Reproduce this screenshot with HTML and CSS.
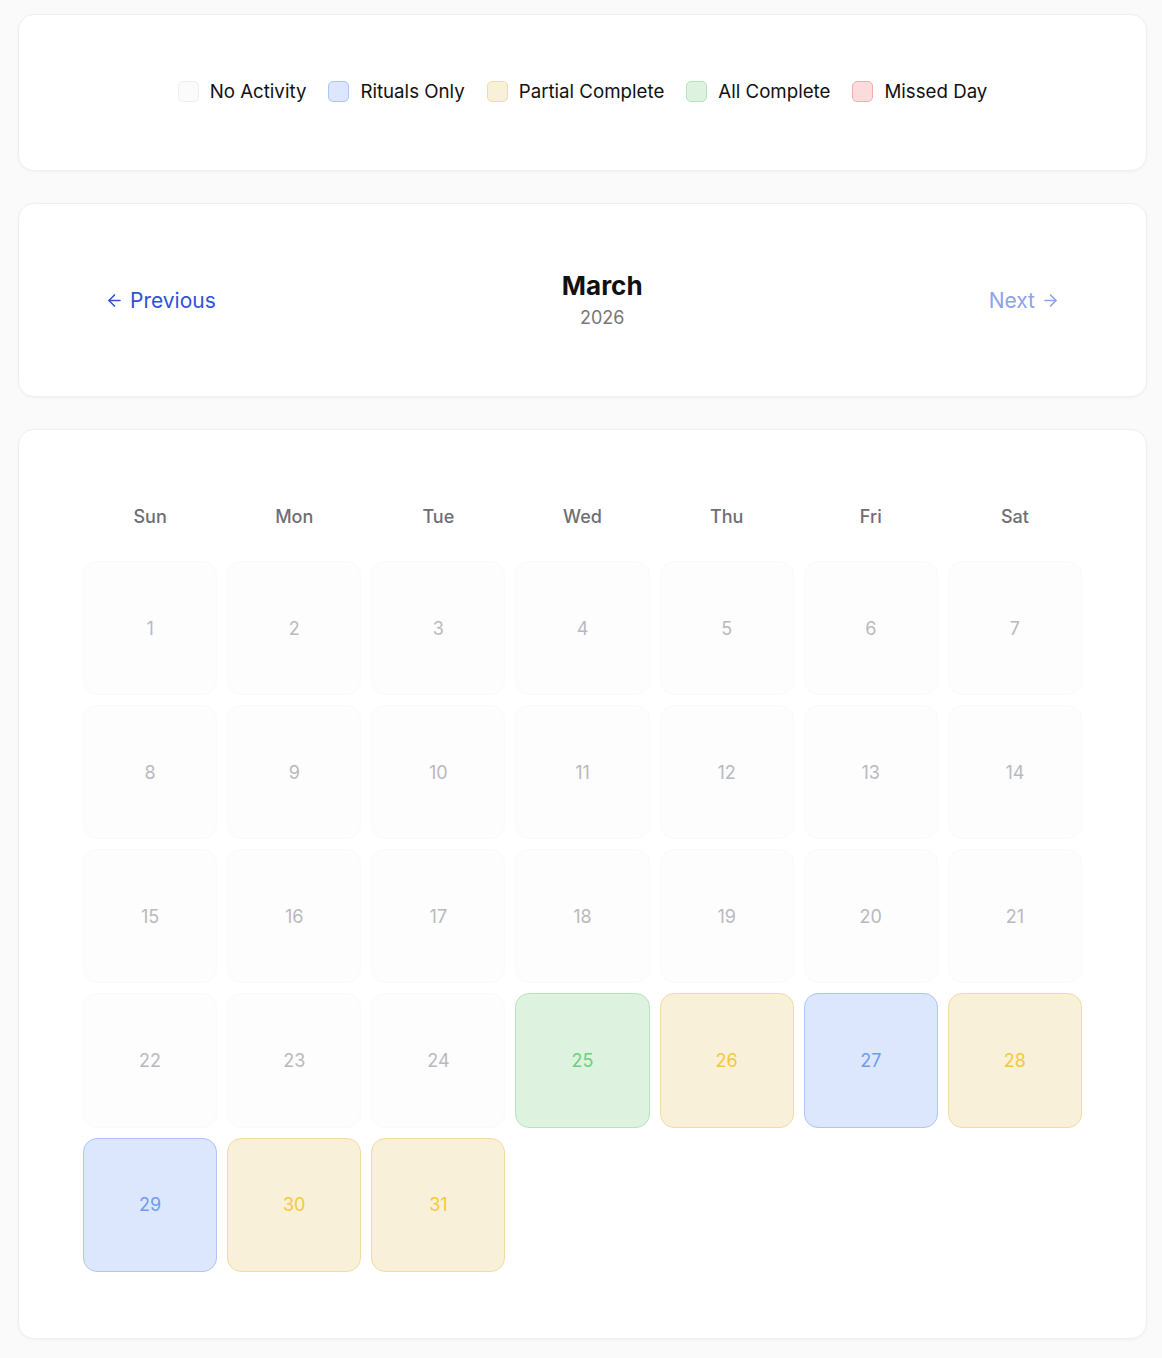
FILE: index.html
```html
<!DOCTYPE html>
<html lang="en">
<head>
    <meta charset="UTF-8">
    <meta name="viewport" content="width=device-width, initial-scale=1.0">
    <title>Ritual Calendar</title>
    <link rel="stylesheet" href="styles.css">
</head>
<body>
    <div class="page">
        <div class="card legend">
            <div class="legend-item"><span class="swatch none"></span>No Activity</div>
            <div class="legend-item"><span class="swatch rituals"></span>Rituals Only</div>
            <div class="legend-item"><span class="swatch partial"></span>Partial Complete</div>
            <div class="legend-item"><span class="swatch complete"></span>All Complete</div>
            <div class="legend-item"><span class="swatch missed"></span>Missed Day</div>
        </div>

        <div class="card month-nav">
            <button class="nav-btn" id="prevBtn">
                <svg width="19" height="19" viewBox="0 0 24 24" fill="none" stroke="currentColor" stroke-width="2" stroke-linecap="round" stroke-linejoin="round"><path d="M19 12H5"/><path d="M12 19l-7-7 7-7"/></svg>
                Previous
            </button>
            <div class="month-title">
                <h2 id="monthName">March</h2>
                <p id="yearName">2026</p>
            </div>
            <button class="nav-btn disabled" id="nextBtn">
                Next
                <svg width="19" height="19" viewBox="0 0 24 24" fill="none" stroke="currentColor" stroke-width="2" stroke-linecap="round" stroke-linejoin="round"><path d="M5 12h14"/><path d="M12 5l7 7-7 7"/></svg>
            </button>
        </div>

        <div class="card calendar">
            <div class="weekdays">
                <div>Sun</div><div>Mon</div><div>Tue</div><div>Wed</div><div>Thu</div><div>Fri</div><div>Sat</div>
            </div>
            <div class="days" id="days"></div>
        </div>
    </div>

    <script>
        // status per day of the month, anything missing = no activity
        const statuses = {
            25: 'complete',
            26: 'partial',
            27: 'rituals',
            28: 'partial',
            29: 'rituals',
            30: 'partial',
            31: 'partial'
        };

        const daysEl = document.getElementById('days');
        const year = 2026;
        const month = 2;
        const firstDay = new Date(year, month, 1).getDay();
        const daysInMonth = new Date(year, month + 1, 0).getDate();

        for (let i = 0; i < firstDay; i++) {
            daysEl.appendChild(document.createElement('div'));
        }

        for (let d = 1; d <= daysInMonth; d++) {
            const cell = document.createElement('div');
            cell.className = 'day ' + (statuses[d] || 'none');
            cell.textContent = d;
            daysEl.appendChild(cell);
        }
    </script>
</body>
</html>
```

FILE: styles.css
```css
body {
    font-family: Inter, "Noto Sans", sans-serif;
    background: #fafafa;
    color: #111;
    margin: 0;
    padding: 0;
}
.page {
    margin: 14px 15px 14px 18px;
    display: flex;
    flex-direction: column;
    gap: 32px;
}
.card {
    background: #fff;
    border: 1px solid #efefef;
    border-radius: 16px;
    box-shadow: 0 1px 3px rgba(0, 0, 0, 0.04);
}

/* legend */
.legend {
    display: flex;
    justify-content: center;
    align-items: center;
    gap: 22px;
    padding: 62px 0 64px;
    font-size: 18.7px;
    line-height: 29px;
}
.legend-item {
    display: flex;
    align-items: center;
    gap: 11px;
}
.swatch {
    width: 19px;
    height: 19px;
    border-radius: 5px;
    border: 1px solid;
}
.swatch.none { background: #fbfbfb; border-color: #eeeeee; }
.swatch.rituals { background: #dce6fd; border-color: #adc6f7; }
.swatch.partial { background: #f9f0d9; border-color: #f2dca2; }
.swatch.complete { background: #ddf3e0; border-color: #b6e4bd; }
.swatch.missed { background: #fadcdc; border-color: #f2aeae; }

/* month navigation */
.month-nav {
    display: flex;
    justify-content: space-between;
    align-items: center;
    padding: 64px 64px;
}
.nav-btn {
    display: flex;
    align-items: center;
    gap: 6px;
    padding: 8px 22px;
    background: none;
    border: none;
    font-family: inherit;
    font-size: 21px;
    color: #2f52d8;
    cursor: pointer;
}
.nav-btn.disabled {
    color: #8ea2ec;
    cursor: default;
}
.month-title {
    text-align: center;
}
.month-title h2 {
    margin: 0;
    font-size: 26px;
    line-height: 36px;
    font-weight: 700;
}
.month-title p {
    margin: 0;
    font-size: 18px;
    line-height: 28px;
    color: #777;
}

/* calendar grid */
.calendar {
    padding: 64px 64px 66px;
}
.weekdays {
    display: grid;
    grid-template-columns: repeat(7, 1fr);
    gap: 10px;
    margin-bottom: 21px;
}
.weekdays div {
    text-align: center;
    font-size: 18px;
    font-weight: 500;
    line-height: 46px;
    color: #6e6e76;
}
.days {
    display: grid;
    grid-template-columns: repeat(7, 1fr);
    gap: 10px;
}
.day {
    aspect-ratio: 1;
    display: flex;
    align-items: center;
    justify-content: center;
    border-radius: 14px;
    border: 1px solid transparent;
    font-size: 18px;
    box-sizing: border-box;
}
.day.none {
    background: #fdfdfd;
    border-color: #fafafa;
    color: #b9b9bd;
}
.day.rituals {
    background: #dce6fd;
    border-color: #adc6f7;
    color: #6f9cf0;
}
.day.partial {
    background: #f9f0d9;
    border-color: #f2dca2;
    color: #f4c83e;
}
.day.complete {
    background: #ddf3e0;
    border-color: #b6e4bd;
    color: #6bd07e;
}
.day.missed {
    background: #fadcdc;
    border-color: #f2aeae;
    color: #e57373;
}
```
